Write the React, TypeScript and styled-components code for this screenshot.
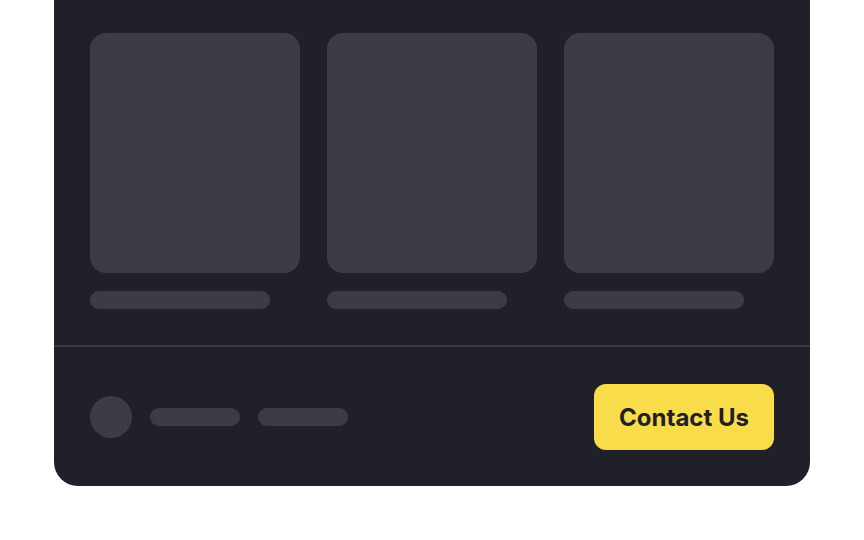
import React from 'react'
import styled, { createGlobalStyle } from 'styled-components'

const GlobalStyle = createGlobalStyle`
  html, body {
    margin: 0;
    padding: 0;
    background: #ffffff;
    font-family: Inter, "Noto Sans", sans-serif;
  }
`

const items = [0, 1, 2]

export default function App() {
  return (
    <>
      <GlobalStyle />
      <Page>
        <Panel>
          <Gallery>
            {items.map(i => (
              <Item key={i}>
                <Thumb />
                <Bar $width={180} />
              </Item>
            ))}
          </Gallery>
          <Footer>
            <Meta>
              <Avatar />
              <Bar $width={90} />
              <Bar $width={90} />
            </Meta>
            <ContactButton>Contact Us</ContactButton>
          </Footer>
        </Panel>
      </Page>
    </>
  )
}

const Page = styled.div`
  height: 540px;
  overflow: hidden;
  display: flex;
  flex-direction: column;
  justify-content: flex-end;
  align-items: center;
  padding-bottom: 54px;
  box-sizing: border-box;
`

// the panel continues above the visible area, so only the bottom corners are rounded
const Panel = styled.div`
  width: 756px;
  flex-shrink: 0;
  background: #202028;
  border-radius: 0 0 24px 24px;
  overflow: hidden;
`

const Gallery = styled.div`
  display: grid;
  grid-template-columns: repeat(3, 210px);
  column-gap: 27px;
  padding: 36px;
  border-bottom: 2px solid #393941;
`

const Item = styled.div`
  display: flex;
  flex-direction: column;
  gap: 18px;
`

const Thumb = styled.div`
  height: 240px;
  border-radius: 16px;
  background: #3c3c46;
`

const Bar = styled.div<{ $width: number }>`
  width: ${p => p.$width}px;
  height: 18px;
  border-radius: 9px;
  background: #3c3c46;
`

const Footer = styled.div`
  display: flex;
  align-items: center;
  justify-content: space-between;
  padding: 37px 36px 36px;
`

const Meta = styled.div`
  display: flex;
  align-items: center;
  gap: 18px;
`

const Avatar = styled.div`
  width: 42px;
  height: 42px;
  border-radius: 50%;
  background: #3c3c46;
`

const ContactButton = styled.button`
  width: 180px;
  height: 66px;
  border: none;
  border-radius: 12px;
  background: #f9dc4a;
  color: #202028;
  font-family: Inter, "Noto Sans", sans-serif;
  font-size: 24px;
  font-weight: 700;
  cursor: pointer;
`
